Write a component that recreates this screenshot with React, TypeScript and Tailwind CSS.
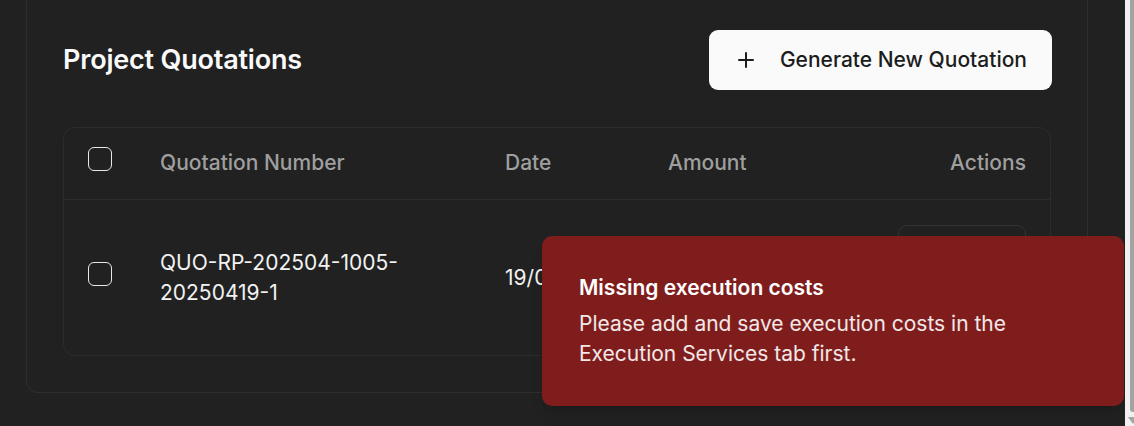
import { Plus } from "lucide-react";

type Quotation = {
  id: string;
  number: string;
  date: string;
  amount: string;
};

const QUOTATIONS: Quotation[] = [
  { id: "q1", number: "QUO-RP-202504-1005-20250419-1", date: "19/04/2025", amount: "₹ 1,24,500.00" },
];

function Checkbox() {
  return <span className="block h-[24px] w-[24px] rounded-[6px] border-[1.5px] border-[#e8e8e8]" />;
}

function Toast({ title, description }: { title: string; description: string }) {
  return (
    <div className="absolute bottom-[20px] right-[10px] w-[582px] rounded-[10px] bg-[#7f1d1d] px-[37px] py-[37px] shadow-lg">
      <p className="text-[21px] font-semibold leading-[30px] text-white">{title}</p>
      <p className="mt-[6px] text-[21px] leading-[30px] text-white/90">{description}</p>
    </div>
  );
}

function Scrollbar() {
  return (
    <div className="absolute right-0 top-0 flex h-full w-[9px] bg-[#f1f1f1]">
      <div className="ml-[5px] h-[412px] w-[4px] rounded-bl-[3px] bg-[#a3a3a3]" />
      <div className="absolute bottom-[2px] left-[3px] h-0 w-0 border-x-[5px] border-t-[7px] border-x-transparent border-t-[#a3a3a3]" />
    </div>
  );
}

export default function App() {
  return (
    <div className="relative h-[426px] w-full overflow-hidden bg-[#212121] font-['Inter',sans-serif]">
      <div className="pl-[26px]">
        <section className="w-[1062px] rounded-b-[12px] border-x border-b border-[#2e2e2e] px-[36px] pb-[36px] pt-[30px]">
          <div className="flex items-center justify-between">
            <h2 className="text-[27px] font-semibold tracking-[-0.2px] text-[#fafafa]">Project Quotations</h2>
            <button className="-mr-px flex h-[60px] items-center gap-[22px] rounded-[9px] bg-[#fafafa] pl-[25px] pr-[25px] text-[21px] font-medium text-[#1c1c1c]">
              <Plus className="h-[24px] w-[24px]" strokeWidth={2} />
              Generate New Quotation
            </button>
          </div>

          <div className="mt-[37px] overflow-hidden rounded-[12px] border border-[#2c2c2c]">
            <div className="grid h-[72px] grid-cols-[72px_345px_163px_1fr_220px] items-center border-b border-[#2c2c2c] pb-[2px] text-[21px] font-medium text-[#9f9f9f]">
              <div className="mb-[7px] flex justify-center">
                <Checkbox />
              </div>
              <div className="px-[24px]">Quotation Number</div>
              <div className="px-[24px]">Date</div>
              <div className="px-[24px]">Amount</div>
              <div className="px-[24px] text-right">Actions</div>
            </div>
            {QUOTATIONS.map((q) => (
              <div
                key={q.id}
                className="grid h-[155px] grid-cols-[72px_345px_163px_1fr_220px] items-center text-[21px] leading-[30px] text-[#f2f2f2]"
              >
                <div className="mb-[8px] flex justify-center">
                  <Checkbox />
                </div>
                <div className="px-[24px]">{q.number}</div>
                <div className="px-[24px]">{q.date}</div>
                <div className="px-[24px]">{q.amount}</div>
                <div className="flex flex-col items-end gap-[9px] px-[24px]">
                  <button className="h-[48px] w-[128px] rounded-[9px] border border-[#333333] text-[18px]">View</button>
                  <button className="h-[48px] w-[128px] rounded-[9px] border border-[#333333] text-[18px]">Download</button>
                </div>
              </div>
            ))}
          </div>
        </section>
      </div>

      <Toast
        title="Missing execution costs"
        description="Please add and save execution costs in the Execution Services tab first."
      />
      <Scrollbar />
    </div>
  );
}
